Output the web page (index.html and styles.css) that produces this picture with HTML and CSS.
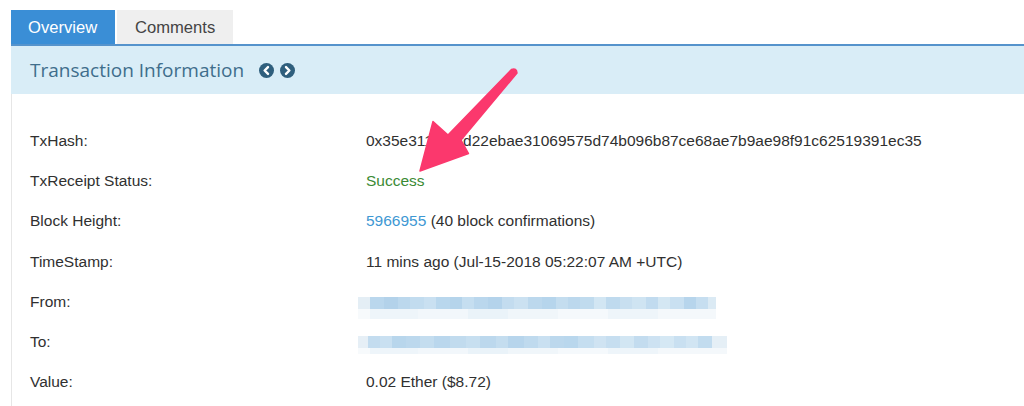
FILE: index.html
```html
<!DOCTYPE html>
<html>
<head>
<meta charset="utf-8">
<link rel="stylesheet" href="styles.css">
</head>
<body>
<div class="page">
  <div class="tabs">
    <div class="tab active">Overview</div>
    <div class="tab">Comments</div>
  </div>
  <div class="panel-head">
    <span class="title">Transaction Information</span>
    <span class="navs">
      <svg class="nav" viewBox="0 0 16 16"><circle cx="8" cy="8" r="8"/><path d="M9.6 4.4 L6 8 L9.6 11.6" /></svg>
      <svg class="nav" viewBox="0 0 16 16"><circle cx="8" cy="8" r="8"/><path d="M6.4 4.4 L10 8 L6.4 11.6" /></svg>
    </span>
  </div>
  <div class="panel-body">
    <div class="row"><div class="label">TxHash:</div><div class="value">0x35e3117a9fd22ebae31069575d74b096b87ce68ae7b9ae98f91c62519391ec35</div></div>
    <div class="row"><div class="label">TxReceipt Status:</div><div class="value success">Success</div></div>
    <div class="row"><div class="label">Block Height:</div><div class="value"><span class="link">5966955</span> (40 block confirmations)</div></div>
    <div class="row"><div class="label">TimeStamp:</div><div class="value">11 mins ago (Jul-15-2018 05:22:07 AM +UTC)</div></div>
    <div class="row"><div class="label">From:</div><div class="value"><div class="blur blur-from"><div class="band-dark"></div><div class="band-light"></div></div></div></div>
    <div class="row"><div class="label">To:</div><div class="value"><div class="blur blur-to"><div class="band-dark"></div><div class="band-light"></div></div></div></div>
    <div class="row"><div class="label">Value:</div><div class="value">0.02 Ether ($8.72)</div></div>
  </div>
</div>
<svg class="annot" viewBox="0 0 1024 406" width="1024" height="406">
  <path d="M511.5 69.5 L448 135 L433 121.5 L420 171 L468.5 153.5 L461 140 L517 73 Q516.5 67.5 511.5 69.5 Z" />
</svg>
</body>
</html>
```

FILE: styles.css
```css
html, body {
  margin: 0;
  padding: 0;
  background: #ffffff;
  overflow: hidden;
}
body {
  width: 1024px;
  height: 406px;
  position: relative;
  font-family: "Liberation Sans", Arial, Helvetica, sans-serif;
}
.page {
  margin-left: 11px;
  padding-top: 10px;
}
.tabs {
  display: flex;
  align-items: flex-end;
  gap: 2px;
  border-bottom: 2px solid #5593cc;
}
.tab {
  height: 34px;
  box-sizing: border-box;
  display: flex;
  align-items: center;
  padding: 2px 17px 0 18px;
  font-size: 16.6px;
  color: #444444;
  background: #efefef;
}
.tab.active {
  background: #3a8ed6;
  color: #ffffff;
  padding: 2px 17px 0 17px;
  width: 104px;
}
.tab:not(.active) {
  width: 116px;
}
.panel-head {
  height: 48px;
  background: #d9edf7;
  display: flex;
  align-items: center;
  padding-left: 19px;
}
.title {
  font-family: "Open Sans", sans-serif;
  font-size: 19px;
  color: #3f6e8c;
}
.navs {
  display: flex;
  gap: 6px;
  margin-left: 15px;
  margin-top: 1px;
}
.nav {
  width: 15px;
  height: 15px;
}
.nav circle {
  fill: #2f5f7d;
}
.nav path {
  fill: none;
  stroke: #ffffff;
  stroke-width: 2.6;
  stroke-linecap: round;
  stroke-linejoin: round;
}
.panel-body {
  border-left: 1px solid #e6e6e6;
  padding: 27px 0 0 18px;
  height: 300px;
}
.row {
  display: flex;
  height: 40.2px;
  align-items: center;
  font-size: 15.5px;
  color: #303030;
}
.label {
  width: 336px;
  flex: none;
}
.value {
  flex: none;
}
.success {
  color: #3b8a34;
}
.link {
  color: #3e98d3;
}
.blur {
  margin-left: -8px;
  display: flex;
  flex-direction: column;
}
.blur-from {
  width: 358px;
  margin-top: 12px;
}
.blur-to {
  width: 369px;
  margin-top: 6px;
}
.band-dark {
  height: 12px;
  background: linear-gradient(90deg,
    #e4eef5 0 12px, #bad7ed 12px 26px, #b3d2ea 26px 40px, #bcd8ed 40px 52px,
    #c2dcef 52px 66px, #c9e0f1 66px 78px, #b9d7ed 78px 92px, #b5d4eb 92px 104px,
    #c5def0 104px 116px, #bad7ed 116px 130px, #b4d3eb 130px 144px, #c3dcef 144px 156px,
    #cbe1f1 156px 170px, #bcd8ed 170px 184px, #b6d5ec 184px 198px, #c4ddef 198px 210px,
    #bcd8ed 210px 222px, #c0dbee 222px 236px, #d2e6f3 236px 248px, #bfdaee 248px 262px,
    #c8dff0 262px 274px, #cfe4f2 274px 288px, #c1dbef 288px 300px, #d4e7f3 300px 312px,
    #c9e0f1 312px 326px, #b7d5ec 326px 338px, #c6def0 338px 350px, #dbeaf4 350px 372px);
}
.blur-to .band-dark {
  background: linear-gradient(90deg,
    #e6eff6 0 10px, #c3dcef 10px 22px, #c9e0f1 22px 34px, #b8d6ec 34px 48px,
    #bcd8ed 48px 62px, #c4ddef 62px 76px, #bad7ed 76px 92px, #c1dbee 92px 108px,
    #c7dff0 108px 122px, #bcd8ed 122px 138px, #c4ddef 138px 150px, #b7d5ec 150px 166px,
    #bfdaee 166px 180px, #c9e0f1 180px 192px, #bcd8ed 192px 206px, #b9d7ed 206px 220px,
    #c5def0 220px 236px, #cfe3f2 236px 248px, #c6def0 248px 262px, #d2e6f3 262px 276px,
    #c3dcef 276px 290px, #cde2f2 290px 302px, #d5e8f4 302px 316px, #c9e0f1 316px 328px,
    #d1e5f3 328px 340px, #c2dcef 340px 354px, #e5eff6 354px 372px);
}
.band-light {
  height: 10px;
  background: linear-gradient(90deg,
    #f7fafc 0 12px, #eef5fa 12px 60px, #f2f7fb 60px 110px, #eaf3f9 110px 150px,
    #f0f6fa 150px 200px, #f5f9fc 200px 250px, #eef5fa 250px 300px, #f4f8fb 300px 372px);
}
.blur-to .band-light {
  height: 6px;
}
.annot {
  position: absolute;
  left: 0;
  top: 0;
  pointer-events: none;
}
.annot path {
  fill: #fb386d;
  stroke: #fb386d;
  stroke-width: 1.5;
  stroke-linejoin: round;
}
```
